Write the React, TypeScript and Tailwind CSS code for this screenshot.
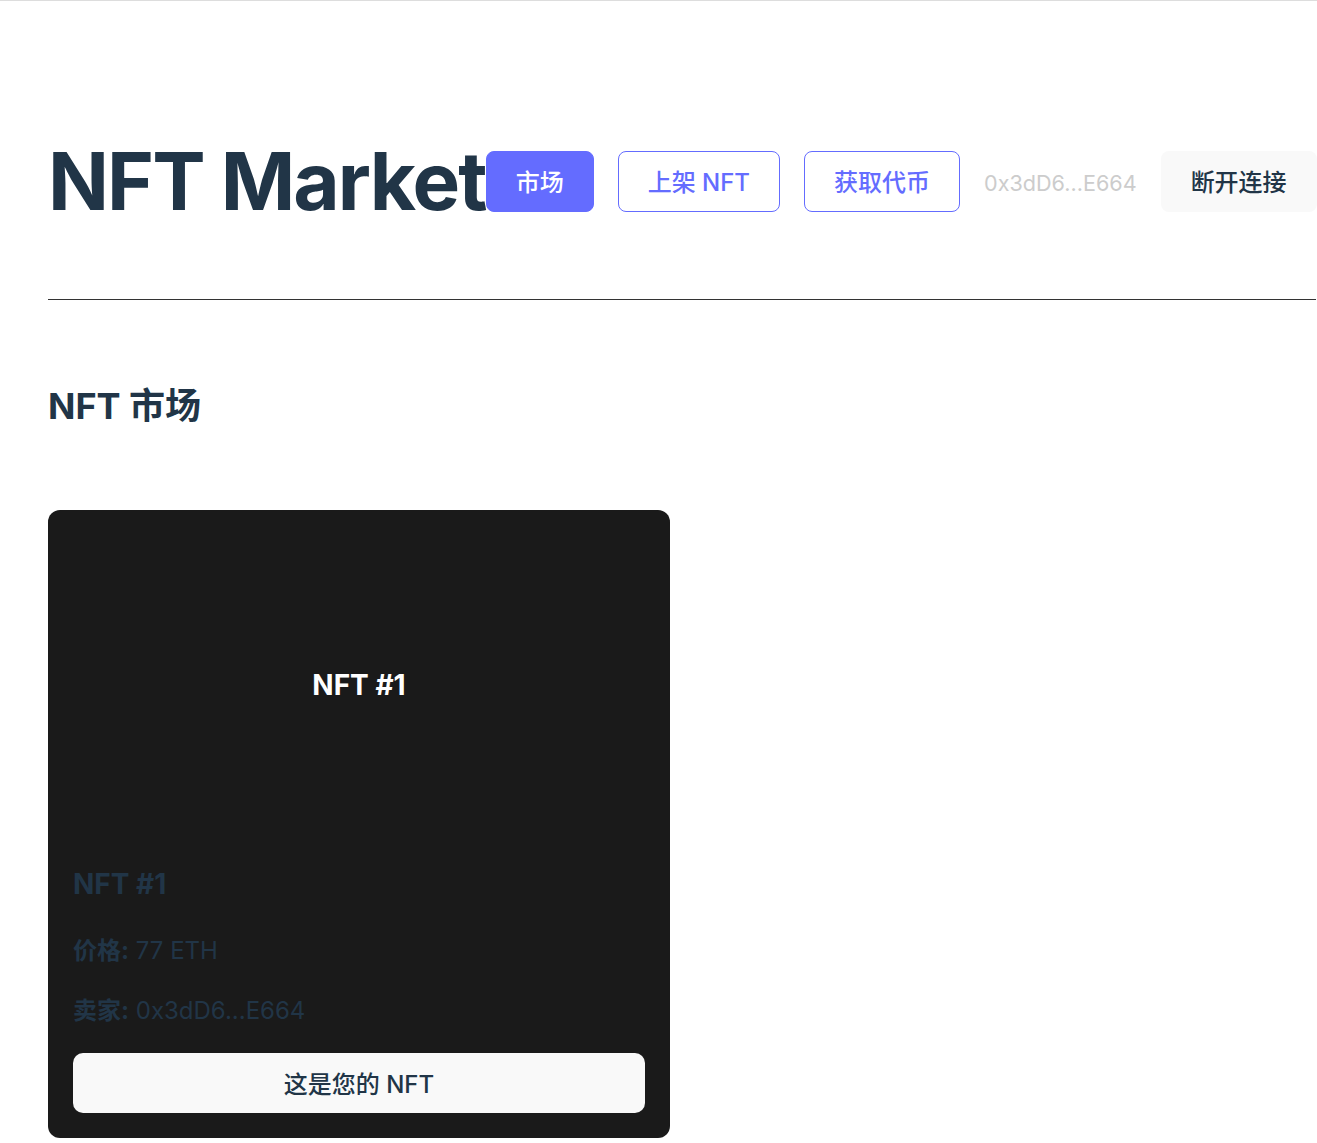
const FONT = "font-['Inter','Noto_Sans_CJK_SC',sans-serif]";

function NavButton({ label, variant }: { label: string; variant: "solid" | "outline" | "ghost" }) {
  const styles = {
    solid: "border-[#646cff] bg-[#646cff] text-white",
    outline: "border-[#646cff] bg-white text-[#646cff]",
    ghost: "border-transparent bg-[#f9f9f9] text-[#213547]",
  }[variant];
  return (
    <button className={`h-[61px] shrink-0 rounded-lg border px-[29px] pt-[4px] text-[24px] font-medium leading-none ${styles}`}>
      {label}
    </button>
  );
}

function NftCard() {
  return (
    <div className="flex w-[622px] flex-col rounded-xl bg-[#1a1a1a] px-[25px] pb-[25px] pt-[25px]">
      <div className="flex h-[300px] items-center justify-center">
        <span className="text-[28px] font-bold text-white">NFT #1</span>
      </div>
      <h3 className="mt-[32px] text-[28px] font-bold leading-[34px] text-[#213547]">NFT #1</h3>
      <p className="mt-[32px] text-[24px] leading-[36px] text-[#213547]">
        <strong className="font-bold">价格:</strong> 77 ETH
      </p>
      <p className="mt-[24px] text-[24px] leading-[36px] text-[#213547]">
        <strong className="font-bold">卖家:</strong> 0x3dD6...E664
      </p>
      <button className="mt-[24px] h-[60px] w-full rounded-[10px] bg-[#f9f9f9] pt-[3px] text-[24px] font-medium text-[#213547]">
        这是您的 NFT
      </button>
    </div>
  );
}

export default function App() {
  return (
    <div className={`min-h-[1143px] overflow-hidden border-t border-[#dddddd] bg-white ${FONT}`}>
      <div className="w-[1316px] pl-12">
        <header className="flex items-center pt-[136px]">
          <h1 className="shrink-0 text-[80px] font-bold leading-[88px] tracking-[-1.9px] text-[#213547]">NFT Market</h1>
          <nav className="flex items-center gap-6">
            <NavButton label="市场" variant="solid" />
            <NavButton label="上架 NFT" variant="outline" />
            <NavButton label="获取代币" variant="outline" />
            <span className="shrink-0 pt-[4px] text-[21.6px] text-[#cccccc]">0x3dD6...E664</span>
            <NavButton label="断开连接" variant="ghost" />
          </nav>
        </header>
        <hr className="mt-[74px] border-t border-[#333333]" />
        <h2 className="mt-[86px] text-[36px] font-bold leading-[40px] text-[#213547]">NFT 市场</h2>
        <div className="mt-[84px]">
          <NftCard />
        </div>
      </div>
    </div>
  );
}
